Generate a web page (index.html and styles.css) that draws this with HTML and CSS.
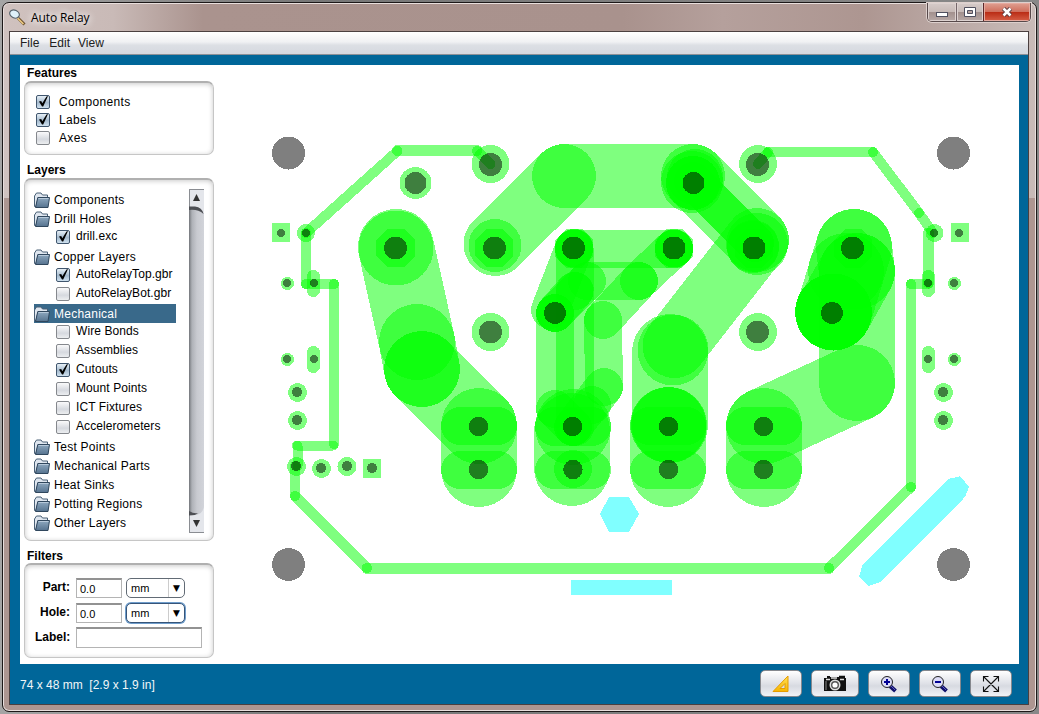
FILE: index.html
```
<!DOCTYPE html>
<html lang="en">
<head>
<meta charset="utf-8">
<title>Auto Relay</title>
<link rel="stylesheet" href="styles.css">
</head>
<body>
<svg class="defs" width="0" height="0" aria-hidden="true">
  <defs>
    <linearGradient id="fold" x1="0" y1="0" x2="0" y2="1"><stop offset="0" stop-color="#8fa9c0"/><stop offset="1" stop-color="#56738f"/></linearGradient>
    <linearGradient id="gold" x1="0" y1="0" x2="0" y2="1"><stop offset="0" stop-color="#ffe25a"/><stop offset="1" stop-color="#f7b500"/></linearGradient>
    <symbol id="folder" viewBox="0 0 16 16">
      <path d="M.5 14.500V4L2.500 1h4.500L8.500 3H13.500V6H4L2 14.500z" fill="#dfe6ef" stroke="#4a6076"/>
      <path d="M3.800 5.500H15.500L14 15.500H1.500z" fill="url(#fold)" stroke="#30475d"/>
      <path d="M4.500 6.500h10" stroke="#b7c9da"/>
    </symbol>
    <symbol id="tick" viewBox="0 0 14 14"><path d="M3 6.500l2.200-.5 1.100 2.300L10.500 1.500 12 1 7.200 11.500H6z" fill="#000"/></symbol>
  </defs>
</svg>
<div class="window">
  <header class="titlebar">
    <svg class="app-icon" width="18" height="18" viewBox="0 0 18 18"><path d="M9 9l6.500 6.500" stroke="#6d5430" stroke-width="3"/><path d="M8.500 9l6 6" stroke="#f2cf83" stroke-width="1.500"/><ellipse cx="5.500" cy="5" rx="5" ry="3.800" transform="rotate(25 5.500 5)" fill="#dff1fa" stroke="#58646d" stroke-width="1.200"/></svg>
    <span class="title">Auto Relay</span>
    <div class="controls">
      <span class="ctl"><svg width="12" height="6"><rect x=".5" y=".5" width="11" height="4" fill="#fff" stroke="#50505f"/></svg></span>
      <span class="ctl mid"><svg width="12" height="10"><path d="M.5.5h11v9H.5z" fill="#fff" stroke="#50505f"/><path d="M3.500 3.500h5v3h-5z" fill="#b5a3a0" stroke="#50505f"/></svg></span>
      <span class="ctl close"><svg width="12" height="10"><path d="M2.500 1.500l7 7m0-7l-7 7" stroke="#5b3e42" stroke-width="4.500"/><path d="M2.500 1.500l7 7m0-7l-7 7" stroke="#fff" stroke-width="2.500"/></svg></span>
    </div>
  </header>
  <div class="client">
    <nav class="menubar"><span>File</span><span>Edit</span><span>View</span></nav>
    <main class="content">
      <aside class="side">
        <h2>Features</h2>
        <section class="panel features">
          <label><i class="cb on"><svg><use href="#tick"/></svg></i>Components</label>
          <label><i class="cb on"><svg><use href="#tick"/></svg></i>Labels</label>
          <label><i class="cb"></i>Axes</label>
        </section>
        <h2 class="h-layers">Layers</h2>
        <section class="panel layers">
          <div class="tree">
            <div class="row"><svg class="fo"><use href="#folder"/></svg>Components</div>
            <div class="row"><svg class="fo"><use href="#folder"/></svg>Drill Holes</div>
            <div class="row leaf"><i class="cb on"><svg><use href="#tick"/></svg></i>drill.exc</div>
            <div class="row"><svg class="fo"><use href="#folder"/></svg>Copper Layers</div>
            <div class="row leaf"><i class="cb on"><svg><use href="#tick"/></svg></i>AutoRelayTop.gbr</div>
            <div class="row leaf"><i class="cb"></i>AutoRelayBot.gbr</div>
            <div class="row selected"><svg class="fo"><use href="#folder"/></svg>Mechanical</div>
            <div class="row leaf"><i class="cb"></i>Wire Bonds</div>
            <div class="row leaf"><i class="cb"></i>Assemblies</div>
            <div class="row leaf"><i class="cb on"><svg><use href="#tick"/></svg></i>Cutouts</div>
            <div class="row leaf"><i class="cb"></i>Mount Points</div>
            <div class="row leaf"><i class="cb"></i>ICT Fixtures</div>
            <div class="row leaf"><i class="cb"></i>Accelerometers</div>
            <div class="row"><svg class="fo"><use href="#folder"/></svg>Test Points</div>
            <div class="row"><svg class="fo"><use href="#folder"/></svg>Mechanical Parts</div>
            <div class="row"><svg class="fo"><use href="#folder"/></svg>Heat Sinks</div>
            <div class="row"><svg class="fo"><use href="#folder"/></svg>Potting Regions</div>
            <div class="row"><svg class="fo"><use href="#folder"/></svg>Other Layers</div>
          </div>
          <div class="scroll">
            <svg width="15" height="26" viewBox="0 0 15 26"><path d="M.5 18V.5H15V26Q13 18 6 18z" fill="#e4e6eb"/><path d="M.5 18V.5H15" fill="none" stroke="#8a8d92"/><path d="M0 17.500h6Q13 18 14.500 25 9 20 0 21z" fill="#4d4f54"/><path d="M4 12h7L7.500 5z" fill="#333"/></svg>
            <svg width="15" height="26" viewBox="0 0 15 26"><path d="M.5 8H6Q13 8 15 0V25.500H.5z" fill="#e4e6eb"/><path d="M.5 8v17.500H15" fill="none" stroke="#8a8d92"/><path d="M0 4q5 3 9 2Q7 8.500 0 8.500z" fill="#4d4f54"/><path d="M4 13h7l-3.500 7z" fill="#333"/></svg>
          </div>
        </section>
        <h2 class="h-filters">Filters</h2>
        <section class="panel filters">
          <div class="f"><b>Part:</b><span class="in">0.0</span><span class="sel"><em>mm</em><i>▼</i></span></div>
          <div class="f"><b>Hole:</b><span class="in">0.0</span><span class="sel focus"><em>mm</em><i>▼</i></span></div>
          <div class="f"><b>Label:</b><span class="in wide"></span></div>
        </section>
      </aside>
      <svg class="board" width="803" height="599" viewBox="216 65 803 599" shape-rendering="crispEdges">
        <g class="cut">
          <path d="M600 514l9-17h20l10 17-10 18h-20z"/>
          <path d="M571 580h101v15H571z"/>
          <path d="M948 479l12.300-2.700L969 486.700l-3.700 10L880.700 582 868 586l-9-9 3.300-12z"/>
        </g>
        <g class="tr w10">
          <path d="M490.500 164L477 151"/><path d="M477 150.500H397.500" stroke-width="11"/><path d="M397.500 151L306 233"/><path d="M306 233v51"/><path d="M306 284h28"/><path d="M334 284v160"/><path d="M333 445.500h-36"/><path d="M297.500 446v20"/><path d="M295 466v30"/><path d="M295 496l72 72"/><path d="M367 568.500h462" stroke-width="11"/><path d="M829 568l82-81"/><path d="M911 487V284"/><path d="M911 284h17"/><path d="M928.500 283v-50" stroke-width="11"/><path d="M933 233l-14-20"/><path d="M919 213l-46-61"/><path d="M873 152H768"/><path d="M768 152l-10 12"/>
        </g>
        <g class="tr w76">
          <path d="M396 247l21 95"/><path d="M417 342l5 27"/><path d="M422 369l57 57"/><path d="M479 426v43"/>
          <path d="M572 431v37"/>
          <path d="M670 352v73"/><path d="M668 425v44"/>
          <path d="M854 247l3 24"/><path d="M857 271v112"/><path d="M857 383l-93 43"/><path d="M764 426v43"/>
          <path d="M854 247l-20 65"/><path d="M857 271l-23 41"/>
        </g>
        <g class="tr w64">
          <path d="M495.500 244l68.500-68"/><path d="M564 176h129"/><path d="M693 176l64 64"/><path d="M757 240l-82.500 106"/>
        </g>
        <g class="tr w38">
          <path d="M693 181l62 62"/><path d="M693 181l62 62"/>
          <path d="M574 249h100"/><path d="M587 281h52"/><path d="M674 248l-35 33"/><path d="M639 281l-36 39"/><path d="M574 248l-24 62"/><path d="M587 281l-32 32"/><path d="M574.500 248v43"/><path d="M574.500 291l-19.500 22"/><path d="M555 313v96"/><path d="M555 409l18 18"/><path d="M575 291v136"/><path d="M603 320l1 67"/><path d="M604 387l-31 40"/>
        </g>
        <g class="pad">
          <circle cx="422" cy="369" r="38"/><circle cx="396" cy="248" r="37.500"/><circle cx="495" cy="245.500" r="26.500"/><circle cx="693" cy="183" r="27"/><circle cx="693" cy="183" r="27"/><circle cx="693" cy="183" r="27"/><circle cx="695" cy="177" r="28"/><circle cx="692" cy="182" r="31"/><circle cx="757" cy="244" r="31"/><circle cx="753" cy="247" r="26"/><circle cx="753" cy="246" r="26"/>
          <circle cx="673" cy="350" r="35.500"/><circle cx="668.500" cy="425" r="38"/><circle cx="669" cy="425" r="38"/>
          <circle cx="846" cy="271" r="38"/><circle cx="833.500" cy="312" r="38.500"/><circle cx="833.500" cy="312" r="38.500"/><circle cx="833.500" cy="312" r="38.500"/><circle cx="833.500" cy="312" r="38.500"/>
          <circle cx="592" cy="405" r="19"/><circle cx="573" cy="427" r="38"/><circle cx="573" cy="427" r="19"/><circle cx="573" cy="469" r="19"/><circle cx="555" cy="313" r="19"/><circle cx="555" cy="313" r="19"/>
          <path d="M388 229h16l11 11v16l-11 11h-16l-12-11v-16z"/><path d="M487 229h16l10 11v16l-10 11h-16l-12-11v-16z"/>
          <path id="oct" d="M566 229h16l11 11v16l-11 12h-16l-11-12v-16z"/><use href="#oct" x="100"/><use href="#oct" x="180"/><use href="#oct" x="279"/>
          <circle cx="574" cy="248.500" r="19"/><circle cx="574" cy="248.500" r="19"/><circle cx="674" cy="248.500" r="19"/><circle cx="674" cy="248.500" r="19"/><circle cx="674" cy="248.500" r="19"/>
          <rect x="441" y="407" width="76" height="38" rx="19"/><rect x="441" y="451" width="76" height="38" rx="19"/><rect x="535" y="407" width="76" height="39" rx="19"/><rect x="535" y="451" width="76" height="38" rx="19"/><rect x="630" y="407" width="76" height="38" rx="19"/><rect x="630" y="451" width="76" height="38" rx="19"/><rect x="726" y="407" width="76" height="38" rx="19"/><rect x="726" y="451" width="76" height="38" rx="19"/>
          <circle cx="415.500" cy="183" r="16"/><circle cx="490.500" cy="164" r="19"/><circle cx="490.500" cy="332" r="19"/><circle cx="758" cy="164" r="19"/><circle cx="758" cy="332" r="19"/>
          <path d="M272 223h18v19h-18zM951 223h18v19h-18zM363 459h18v19h-18z"/>
          <circle cx="306" cy="233" r="9"/><circle cx="934.500" cy="233" r="9"/><circle cx="287.500" cy="283.500" r="6.500"/><circle cx="954.500" cy="283.500" r="6.500"/><circle cx="287.500" cy="359.500" r="6.500"/><circle cx="954.500" cy="359.500" r="6.500"/>
          <rect x="307" y="270" width="13" height="27" rx="6.500"/><rect x="307" y="346" width="13" height="27" rx="6.500"/><rect x="922" y="270" width="13" height="27" rx="6.500"/><rect x="922" y="346" width="13" height="27" rx="6.500"/>
          <circle cx="297.500" cy="392.500" r="9.500"/><circle cx="297.500" cy="420.500" r="9.500"/><circle cx="943.500" cy="392.500" r="9.500"/><circle cx="943.500" cy="420.500" r="9.500"/><circle cx="296.500" cy="466.500" r="9.500"/><circle cx="321.500" cy="468.500" r="9.500"/><circle cx="347" cy="466.500" r="9.500"/>
        </g>
        <g class="hole">
          <circle cx="288.500" cy="153" r="16.500"/><circle cx="953.500" cy="153" r="16.500"/><circle cx="288.500" cy="564.500" r="16.500"/><circle cx="953.500" cy="564.500" r="16.500"/>
          <circle cx="490.500" cy="164.500" r="11.500"/><circle cx="490.500" cy="332" r="11.500"/><circle cx="757.500" cy="164.500" r="11.500"/><circle cx="757.500" cy="332" r="11.500"/><circle cx="415.500" cy="183" r="11"/><circle cx="693.500" cy="183" r="11"/>
          <circle cx="395.500" cy="248" r="11.500"/><circle cx="494.500" cy="248" r="11.500"/><circle cx="573.500" cy="248" r="11.500"/><circle cx="674" cy="248" r="11.500"/><circle cx="754" cy="248" r="11.500"/><circle cx="852.500" cy="248" r="11.500"/><circle cx="555" cy="313" r="11"/><circle cx="832" cy="313" r="11"/>
          <circle cx="478.500" cy="426.500" r="9.700"/><circle cx="478.500" cy="469.500" r="9.700"/><circle cx="572.500" cy="426.500" r="9.700"/><circle cx="573" cy="469.500" r="9.700"/><circle cx="668.500" cy="426.500" r="9.700"/><circle cx="668.500" cy="469.500" r="9.700"/><circle cx="763.500" cy="426.500" r="9.700"/><circle cx="763.500" cy="469.500" r="9.700"/>
          <circle cx="281" cy="233" r="4"/><circle cx="306" cy="233" r="4"/><circle cx="934" cy="233" r="4"/><circle cx="959" cy="233" r="4"/><circle cx="287" cy="283" r="4"/><circle cx="314" cy="283" r="4"/><circle cx="928" cy="283" r="4"/><circle cx="954" cy="283" r="4"/><circle cx="287" cy="359" r="4"/><circle cx="314" cy="359" r="4"/><circle cx="928" cy="359" r="4"/><circle cx="954" cy="359" r="4"/>
          <circle cx="297" cy="392" r="5"/><circle cx="297" cy="420" r="5"/><circle cx="943" cy="392" r="5"/><circle cx="943" cy="420" r="5"/><circle cx="296" cy="466" r="5"/><circle cx="321" cy="468" r="5"/><circle cx="347" cy="466" r="5"/><circle cx="372" cy="468" r="5"/>
        </g>
      </svg>
    </main>
    <footer class="status">
      <span class="size">74 x 48 mm&nbsp; [2.9 x 1.9 in]</span>
      <div class="tools">
        <button><svg width="18" height="18" viewBox="0 0 18 18"><path d="M1 16.500L16 1v15.500zM8 13.500h5V8.500z" fill="url(#gold)" stroke="#e59b00" fill-rule="evenodd"/></svg></button>
        <button class="cam"><svg width="24" height="18" viewBox="0 0 24 18"><path d="M1 3h3V1h3v1h9V.8h6V3h1v13H1z" fill="#111"/><path d="M3 4.500h4M17 4.500h4M8 3h6" stroke="#ddd" stroke-width="1.500"/><path d="M3 6v9" stroke="#888"/><circle cx="12" cy="10" r="5.500" fill="#ddd"/><circle cx="12" cy="10" r="4" fill="#555"/><circle cx="12" cy="10" r="2.600" fill="#fff"/></svg></button>
        <button><svg width="18" height="18" viewBox="0 0 18 18"><path d="M10 11l5.500 5" stroke="#10106b" stroke-width="4"/><path d="M11 11l4 4" stroke="#5d5dc0"/><circle cx="7" cy="7" r="5.500" fill="#dcdcf7" stroke="#222"/><path d="M7 4v6M4 7h6" stroke="#000094" stroke-width="2"/></svg></button>
        <button><svg width="18" height="18" viewBox="0 0 18 18"><path d="M10 11l5.500 5" stroke="#10106b" stroke-width="4"/><path d="M11 11l4 4" stroke="#5d5dc0"/><circle cx="7" cy="7" r="5.500" fill="#dcdcf7" stroke="#222"/><path d="M4 7h6" stroke="#000094" stroke-width="2"/></svg></button>
        <button><svg width="18" height="18" viewBox="0 0 18 18"><path d="M1.500 6.500v-5h5M11.500 1.500h5v5M16.500 11.500v5h-5M6.500 16.500h-5v-5M2 2l14 14M16 2L2 16" fill="none" stroke="#111" stroke-width="1.100"/></svg></button>
      </div>
    </footer>
  </div>
</div>
</body>
</html>
```
FILE: styles.css
```
* { box-sizing: border-box; }
body {
  margin: 0;
  width: 1039px;
  height: 714px;
  overflow: hidden;
  padding: 2px;
  background: linear-gradient(90deg, #a5a5a5, #777 30%, #888);
  font: 12px/19px "Liberation Sans", Arial, sans-serif;
  color: #000;
}
.defs { position: absolute; }
.window {
  width: 1035px;
  height: 710px;
  border: 1px solid #1c1818;
  border-radius: 7px;
  padding: 0 7px 6px 6px;
  background: linear-gradient(90deg, #d0c2bf 0, #c9bab7 110px, #aa938e 200px, #a9928d 620px, #b5a09c 720px, #ad9691 860px, #c8bbb8 100%) top / 100% 195px no-repeat, #ad9691;
  box-shadow: inset 0 0 0 1px #e8dfdd;
}
.titlebar { height: 28px; display: flex; padding: 6px 0 0 0; }
.title {
  font: 12px/18px "Open Sans", sans-serif;
  margin-left: 4px;
  letter-spacing: -0.1px;
  text-shadow: 0 0 7px #fff, 0 0 9px #fff;
}
.controls {
  margin: -6px -2px 0 auto;
  height: 19px;
  display: flex;
  border: 1px solid #57494a;
  border-top: 0;
  border-radius: 0 0 5px 5px;
  overflow: hidden;
  box-shadow: 0 0 0 1px #ddd0cd;
}
.ctl {
  width: 28px;
  display: flex;
  justify-content: center;
  align-items: center;
  background: linear-gradient(#d6cbc9, #c7bab7 48%, #a2908d 50%, #b8a9a6);
  box-shadow: inset 0 0 0 1px #ddd2d0;
}
.ctl:first-child { padding-top: 5px; }
.ctl.mid { border-left: 1px solid #75666a; width: 27px; }
.ctl.close { width: 47px; border-left: 1px solid #5b282a; background: linear-gradient(#dfa092, #cf6f5d 48%, #b92b14 50%, #d65f46); box-shadow: inset 0 0 0 1px #e5aa9f; }
.client {
  height: 674px;
  border: 1px solid #4b4040;
  background: #069;
  display: flex;
  flex-direction: column;
}
.menubar {
  height: 23px;
  border-bottom: 1px solid #8c9097;
  background: linear-gradient(#fff, #f0f1f3 45%, #dcdfe4 60%, #d5d8df);
  display: flex;
  gap: 10px;
  padding: 2px 0 0 10px;
  color: #202020;
}
.menubar span:last-child { margin-left: -2px; }
.content {
  margin: 10px 10px 0 10px;
  width: 999px;
  height: 599px;
  background: #fff;
  display: flex;
}
.side { width: 196px; flex: none; padding-left: 4px; }
.board { flex: none; display: block; }
h2 { font-size: 12px; height: 16px; line-height: 17px; margin: 0 0 0 3px; font-weight: bold; }
.panel {
  width: 190px;
  border: 1px solid #c6c6c6;
  border-top: 2px solid #b0b0b0;
  border-radius: 7px;
  box-shadow: inset 0 1px 5px #c8c8c8;
}
.features { height: 74px; padding: 10px 0 0 11px; letter-spacing: .35px; }
.features label { display: flex; height: 18px; line-height: 18px; align-items: center; gap: 9px; }
.h-layers { margin-top: 7px; line-height: 16px; }
.layers { height: 363px; padding: 10px 0 0 9px; display: flex; }
.tree { width: 142px; letter-spacing: .25px; }
.row { height: 19px; display: flex; align-items: center; padding-top: 1px; gap: 4px; white-space: nowrap; }
.leaf { padding: 0 0 2px 22px; gap: 6px; letter-spacing: .08px; }
.selected { background: #39698a; color: #fff; }
.fo { width: 16px; height: 16px; flex: none; margin-top: -1px; }
.cb {
  width: 14px;
  height: 14px;
  flex: none;
  border: 1px solid #85888d;
  border-radius: 2px;
  background: linear-gradient(#fafafb, #d6d9df 60%, #eceef0);
}
.cb.on { border-color: #40566e; background: linear-gradient(#e7f0f7, #a5bacd 55%, #cfe1ef); }
.cb svg { display: block; width: 14px; height: 14px; margin: -1px; }
.scroll {
  width: 15px;
  height: 344px;
  margin-left: 13px;
  margin-top: -1px;
  background: linear-gradient(90deg, #73767b, #aeb1b7 3px, #c8cad0 8px, #d2d4da);
  display: flex;
  flex-direction: column;
  justify-content: space-between;
}
.h-filters { margin-top: 7px; height: 15px; line-height: 16px; }
.filters { height: 95px; padding: 10px 0 0 10px; }
.f { height: 25px; display: flex; align-items: center; }
.f b { width: 35px; text-align: right; margin-right: 6px; white-space: nowrap; }
.in { width: 46px; height: 20px; border: 1px solid #b4b4b4; border-top: 2px solid #929292; font-size: 11px; line-height: 18px; padding-left: 3px; background: #fff; }
.wide { width: 126px; height: 21px; }
.sel { width: 59px; height: 20px; margin-left: 4px; border: 1px solid #626b75; border-radius: 5px; display: flex; background: #fff; font-size: 11px; line-height: 19px; }
.sel em { width: 42px; font-style: normal; padding-left: 4px; border-right: 1px solid #ccc; }
.sel i { font: 9px/18px "DejaVu Sans", sans-serif; margin-left: 4px; }
.focus { box-shadow: 0 0 0 1px #6f9dcb; border-color: #365579; }
.status { height: 39px; display: flex; align-items: center; padding: 2px 16px 0 10px; color: #f2f6f8; }
.size { padding-top: 2px; }
.tools { margin-left: auto; margin-top: -2px; display: flex; gap: 9px; }
.tools button {
  width: 42px;
  height: 27px;
  border: 1px solid #85888e;
  border-radius: 5px;
  background: linear-gradient(#fff, #dfe1e7 50%, #d7dae1 60%, #f1f2f6);
  display: flex;
  align-items: center;
  justify-content: center;
  padding: 0;
}
.tools .cam { width: 48px; }
.cut { fill: #80ffff; }
.tr path { fill: none; stroke: #0f0; stroke-opacity: .5; stroke-linecap: round; }
.w10 { stroke-width: 10px; }
.w38 { stroke-width: 38px; }
.w64 { stroke-width: 64px; }
.w76 { stroke-width: 76px; }
.pad { fill: #0f0; fill-opacity: .5; }
.hole { fill: #000; fill-opacity: .5; }
```
